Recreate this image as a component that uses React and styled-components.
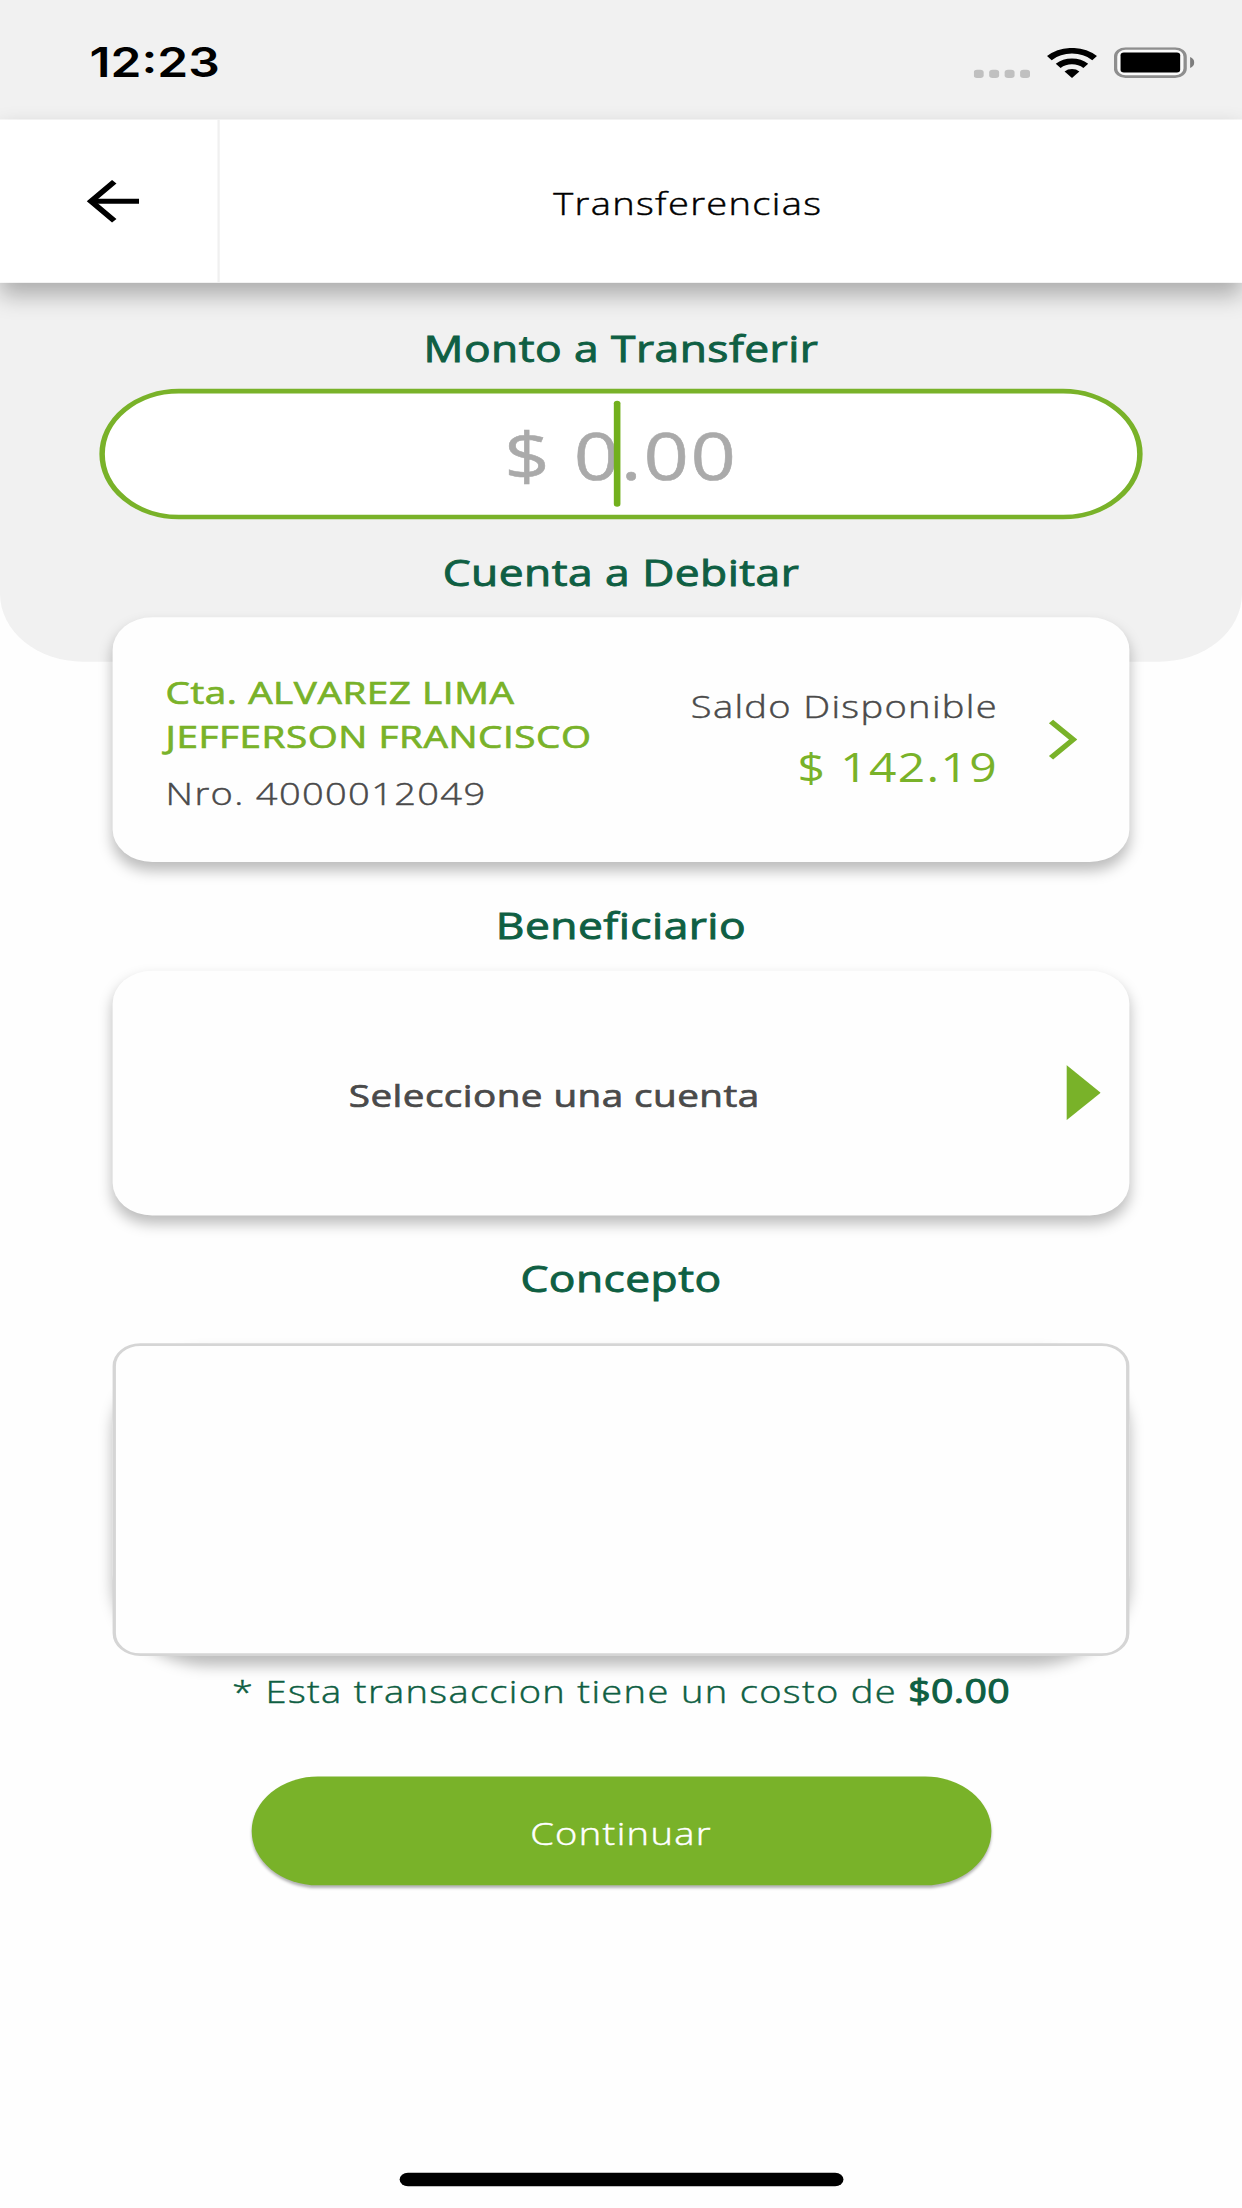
import React from 'react';
import styled, { createGlobalStyle } from 'styled-components';

const GlobalStyle = createGlobalStyle`
  body {
    margin: 0;
    background-color: #fefefe;
  }

  * {
    box-sizing: border-box;
  }
`;

const Viewport = styled.div`
  width: 1242px;
  height: 2208px;
  overflow: hidden;
`;

/* 375x812pt layout at 3x, stretched to fill the 1242x2208 viewport */
const Screen = styled.div`
  width: 1125px;
  height: 2436px;
  transform: scale(1.104, 0.9064);
  transform-origin: 0 0;
  display: flex;
  flex-direction: column;
  background-color: #fefefe;
  font-family: 'Open Sans', 'Noto Sans', sans-serif;
  font-size: 34.5px;
  font-weight: 300;
  letter-spacing: 1.2px;
  -webkit-text-stroke-width: 0.5px;
  color: #4a4a4a;
`;

const StatusBar = styled.div`
  height: 132px;
  flex-shrink: 0;
  background-color: #f1f1f1;
  display: flex;
  align-items: flex-start;
  justify-content: space-between;
  padding: 42px 43px 0 81px;
`;

const Time = styled.span`
  font-family: Inter, sans-serif;
  font-size: 45px;
  font-weight: 600;
  line-height: 54px;
  letter-spacing: 0;
  -webkit-text-stroke-width: 0;
  color: #000000;
`;

const StatusIcons = styled.div`
  display: flex;
  align-items: center;
  gap: 15px;
  padding-top: 10px;

  svg {
    display: block;
  }
`;

const Header = styled.header`
  height: 180px;
  flex-shrink: 0;
  display: flex;
  background-color: #ffffff;
  position: relative;
  z-index: 2;
  box-shadow: 0 13px 22px rgba(0, 0, 0, 0.29);
`;

const BackButton = styled.button`
  width: 199px;
  padding: 0 0 0 6px;
  border: none;
  border-right: 2px solid #f0f0f0;
  background: none;
  display: flex;
  align-items: center;
  justify-content: center;
`;

const HeaderTitle = styled.h1`
  flex: 1;
  margin: 0;
  padding: 2px 78px 0 0;
  display: flex;
  align-items: center;
  justify-content: center;
  font-size: 34.5px;
  font-weight: 300;
  color: #000000;
`;

const Hero = styled.section`
  height: 418px;
  flex-shrink: 0;
  padding: 43px 90px 0;
  background-color: #f1f1f1;
  border-radius: 0 0 75px 75px;
`;

const Heading = styled.h2`
  margin: 0;
  font-size: 40.2px;
  font-weight: 400;
  line-height: 57px;
  letter-spacing: 0.4px;
  -webkit-text-stroke-width: 1px;
  text-align: center;
  color: #0f5f43;
`;

const AmountInput = styled.div`
  height: 144px;
  margin: 17px 0 28.5px;
  padding-top: 2px;
  border: 5px solid #79b229;
  border-radius: 72px;
  background-color: #ffffff;
  display: flex;
  align-items: center;
  justify-content: center;
  position: relative;
  font-size: 72px;
  font-weight: 400;
  line-height: 98px;
  letter-spacing: 1.5px;
  -webkit-text-stroke-width: 0.6px;
  color: #aaaaaa;
`;

const Caret = styled.span`
  position: absolute;
  top: 8px;
  left: 461px;
  width: 6px;
  height: 117px;
  border-radius: 3px;
  background-color: #72b01d;
`;

const Form = styled.main`
  display: flex;
  flex-direction: column;
  margin-top: -49px;
  padding: 0 102px;
`;

const Card = styled.div`
  height: 270px;
  border-radius: 36px;
  background-color: #fefefe;
  box-shadow: 0 9px 14px rgba(0, 0, 0, 0.26);
  display: flex;
  align-items: center;
`;

const AccountCard = styled(Card)`
  margin-bottom: 41px;
  padding: 0 47px 0 48px;
`;

const BeneficiaryCard = styled(Card)`
  margin: 21.5px 0 40.5px;
  padding-right: 26.5px;
`;

const AccountInfo = styled.div`
  flex: 1;
  display: flex;
  flex-direction: column;
  gap: 15px;
  padding-top: 4px;
`;

const AccountName = styled.p`
  margin: 0;
  font-size: 35px;
  font-weight: 400;
  line-height: 48.5px;
  letter-spacing: 0.5px;
  -webkit-text-stroke-width: 0.8px;
  white-space: nowrap;
  color: #79b229;
`;

const SmallText = styled.p`
  margin: 0;
  line-height: 45px;
  white-space: nowrap;
`;

const Balance = styled.div`
  display: flex;
  flex-direction: column;
  align-items: flex-end;
  gap: 17px;
  margin-right: 46px;
`;

const BalanceAmount = styled.p`
  margin: 0;
  font-size: 43.5px;
  font-weight: 400;
  line-height: 58px;
  -webkit-text-stroke-width: 0;
  color: #79b229;
`;

const Placeholder = styled.p`
  width: 800px;
  margin: 0;
  padding-top: 5px;
  font-size: 35px;
  font-weight: 400;
  line-height: 48px;
  letter-spacing: 0.4px;
  -webkit-text-stroke-width: 0.8px;
  text-align: center;
`;

const Arrow = styled.svg`
  display: block;
  margin-left: auto;
`;

const ConceptBox = styled.div`
  height: 345px;
  margin-top: 44px;
  position: relative;
  z-index: 0;

  /* the shadow follows a rounder shape than the field itself */
  &::before {
    content: '';
    position: absolute;
    inset: 0;
    z-index: -1;
    border-radius: 90px;
    box-shadow: 0 10px 14px rgba(0, 0, 0, 0.26);
  }
`;

const ConceptField = styled.textarea`
  display: block;
  width: 100%;
  height: 100%;
  padding: 24px;
  border: 3px solid #d5d5d5;
  border-radius: 25px;
  background-color: #fefefe;
  resize: none;
  outline: none;
`;

const CostNote = styled.p`
  margin: 15px 0 71px;
  line-height: 46px;
  text-align: center;
  white-space: nowrap;
  color: #0f5f43;

  strong {
    font-size: 35.5px;
    font-weight: 400;
    letter-spacing: 0.3px;
    -webkit-text-stroke-width: 1.1px;
  }
`;

const ContinueButton = styled.button`
  width: 670px;
  height: 120px;
  padding: 3px 0 0;
  align-self: center;
  border: none;
  border-radius: 60px;
  background-color: #79b229;
  box-shadow: 0 3px 3px rgba(0, 0, 0, 0.3);
  font: inherit;
  letter-spacing: inherit;
  color: #ffffff;
`;

const HomeIndicator = styled.div`
  width: 402px;
  height: 15px;
  margin: auto auto 24px;
  border-radius: 8px;
  background-color: #000000;
`;

function SignalDots() {
  return (
    <svg width="51" height="33" viewBox="0 0 51 33" fill="#c0c0c0">
      {[0, 14, 28, 42].map((x) => (
        <rect key={x} x={x} y="24" width="9" height="9" rx="3" />
      ))}
    </svg>
  );
}

function WifiIcon() {
  return (
    <svg width="46" height="33" viewBox="0 0 46 33">
      <path d="M2.5 11.1A30 30 0 0 1 43.5 11.1" fill="none" stroke="#000" strokeWidth="6.2" />
      <path d="M10.5 19.6A18.3 18.3 0 0 1 35.5 19.6" fill="none" stroke="#000" strokeWidth="6.4" />
      <path d="M23 33L16.3 25.8A9.8 9.8 0 0 1 29.7 25.8Z" fill="#000" />
    </svg>
  );
}

function BatteryIcon() {
  return (
    <svg width="73" height="34" viewBox="0 0 73 34">
      <rect x="1.5" y="1.5" width="63" height="31" rx="9" fill="#fafafa" stroke="#8e8e8e" strokeWidth="3" />
      <rect x="6" y="6" width="54" height="22" rx="3" fill="#000" />
      <path d="M69 11C74 13 74 21 69 23Z" fill="#7d7d7d" />
    </svg>
  );
}

export default function App() {
  return (
    <Viewport>
      <GlobalStyle />
      <Screen>
        <StatusBar>
          <Time>12:23</Time>
          <StatusIcons>
            <SignalDots />
            <WifiIcon />
            <BatteryIcon />
          </StatusIcons>
        </StatusBar>
        <Header>
          <BackButton aria-label="Volver">
            <svg width="48" height="48" viewBox="0 0 48 48" fill="none" stroke="#000" strokeWidth="5.6">
              <path d="M25.5 2.5L4.5 24L25.5 45.5" />
              <path d="M6 24H48" />
            </svg>
          </BackButton>
          <HeaderTitle>Transferencias</HeaderTitle>
        </Header>
        <Hero>
          <Heading>Monto a Transferir</Heading>
          <AmountInput>
            $ 0.00
            <Caret />
          </AmountInput>
          <Heading>Cuenta a Debitar</Heading>
        </Hero>
        <Form>
          <AccountCard>
            <AccountInfo>
              <AccountName>
                Cta. ALVAREZ LIMA
                <br />
                JEFFERSON FRANCISCO
              </AccountName>
              <SmallText>Nro. 4000012049</SmallText>
            </AccountInfo>
            <Balance>
              <SmallText>Saldo Disponible</SmallText>
              <BalanceAmount>$ 142.19</BalanceAmount>
            </Balance>
            <Arrow width="26" height="46" viewBox="0 0 26 46" fill="none" stroke="#79b229" strokeWidth="5.4">
              <path d="M2 3L22 23L2 43" />
            </Arrow>
          </AccountCard>
          <Heading>Beneficiario</Heading>
          <BeneficiaryCard>
            <Placeholder>Seleccione una cuenta</Placeholder>
            <Arrow width="31" height="61" viewBox="0 0 31 61" fill="#79b229">
              <path d="M0 0L31 30.5L0 61Z" />
            </Arrow>
          </BeneficiaryCard>
          <Heading>Concepto</Heading>
          <ConceptBox>
            <ConceptField aria-label="Concepto" />
          </ConceptBox>
          <CostNote>
            * Esta transaccion tiene un costo de <strong>$0.00</strong>
          </CostNote>
          <ContinueButton>Continuar</ContinueButton>
        </Form>
        <HomeIndicator />
      </Screen>
    </Viewport>
  );
}
